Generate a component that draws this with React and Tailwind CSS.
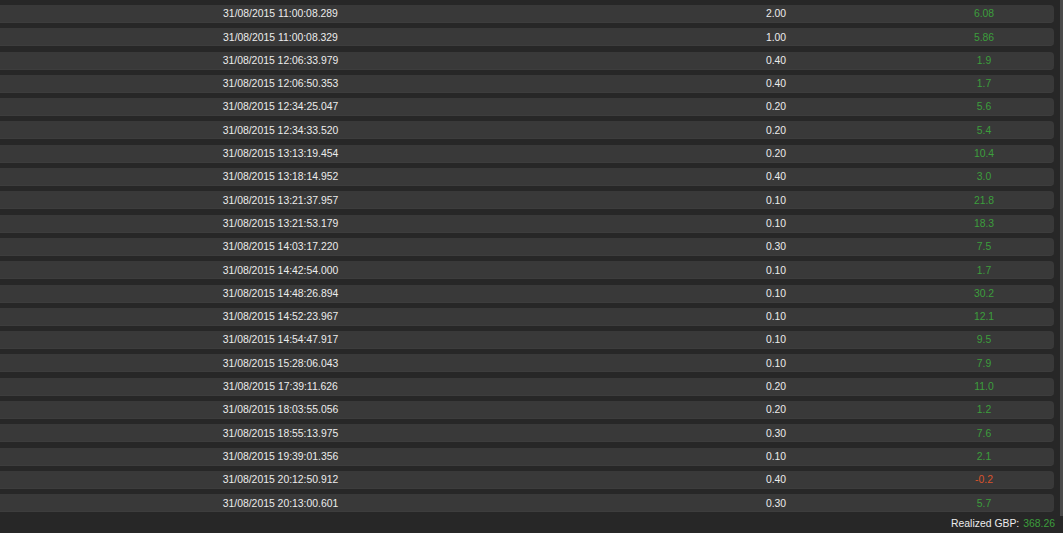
import React from "react";

const rows = [
  ["31/08/2015 11:00:08.289", "2.00", "6.08"],
  ["31/08/2015 11:00:08.329", "1.00", "5.86"],
  ["31/08/2015 12:06:33.979", "0.40", "1.9"],
  ["31/08/2015 12:06:50.353", "0.40", "1.7"],
  ["31/08/2015 12:34:25.047", "0.20", "5.6"],
  ["31/08/2015 12:34:33.520", "0.20", "5.4"],
  ["31/08/2015 13:13:19.454", "0.20", "10.4"],
  ["31/08/2015 13:18:14.952", "0.40", "3.0"],
  ["31/08/2015 13:21:37.957", "0.10", "21.8"],
  ["31/08/2015 13:21:53.179", "0.10", "18.3"],
  ["31/08/2015 14:03:17.220", "0.30", "7.5"],
  ["31/08/2015 14:42:54.000", "0.10", "1.7"],
  ["31/08/2015 14:48:26.894", "0.10", "30.2"],
  ["31/08/2015 14:52:23.967", "0.10", "12.1"],
  ["31/08/2015 14:54:47.917", "0.10", "9.5"],
  ["31/08/2015 15:28:06.043", "0.10", "7.9"],
  ["31/08/2015 17:39:11.626", "0.20", "11.0"],
  ["31/08/2015 18:03:55.056", "0.20", "1.2"],
  ["31/08/2015 18:55:13.975", "0.30", "7.6"],
  ["31/08/2015 19:39:01.356", "0.10", "2.1"],
  ["31/08/2015 20:12:50.912", "0.40", "-0.2"],
  ["31/08/2015 20:13:00.601", "0.30", "5.7"],
];

export default function App() {
  return (
    <div
      className="w-[1063px] h-[533px] bg-[#272727] overflow-hidden flex text-[#ececec] text-[10.4px] leading-none"
      style={{ fontFamily: '"Liberation Sans", Arial, sans-serif' }}
    >
      <div className="flex flex-col w-[1060px]">
        <div className="flex flex-col gap-[5.3px] pt-[5px] w-[1054px]">
          {rows.map(([d, q, v], i) => (
            <div
              key={i}
              className="h-[18px] pt-[2px] flex items-center bg-[#393939] rounded-r-[4px] border-b border-[#3d3d3d]"
            >
              <div className="w-[561px] text-center">{d}</div>
              <div className="w-[139px]" />
              <div className="w-[152px] text-center">{q}</div>
              <div className="w-[62px]" />
              <div
                className={
                  "w-[140px] text-center " +
                  (v.startsWith("-") ? "text-[#d9532c]" : "text-[#3c9e3c]")
                }
              >
                {v}
              </div>
            </div>
          ))}
        </div>
        <div className="flex justify-end pr-[5px] pt-[7px]">
          <span className="text-[#ececec]">Realized GBP:</span>
          <span className="text-[#3c9e3c] ml-[4px]">368.26</span>
        </div>
      </div>
      <div className="w-[3px] h-[516px] bg-[#4a4a4a]" />
    </div>
  );
}
